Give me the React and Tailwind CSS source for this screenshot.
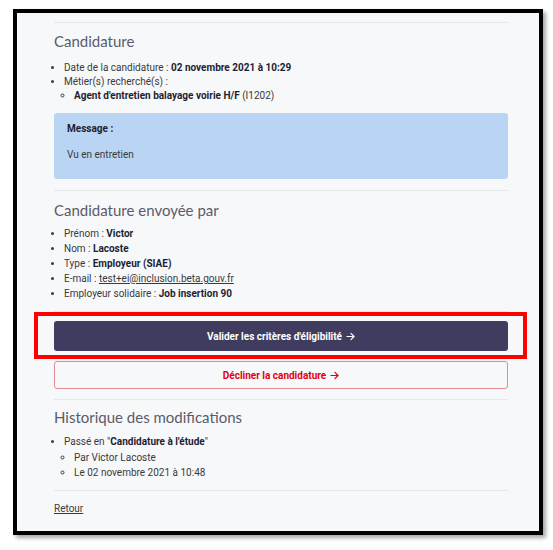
import React from 'react';

function Divider() {
  return <div className="h-px bg-[#e5e7eb]" />;
}

function Heading({ children }) {
  return (
    <h2 className="text-[15px] leading-[20px] text-[#5b5b6b] font-['Lato','Open_Sans',sans-serif]">
      {children}
    </h2>
  );
}

function Strong({ children }) {
  return <b className="font-bold text-[#1e1e32]">{children}</b>;
}

function Arrow() {
  return (
    <svg viewBox="0 0 10 10" className="inline-block w-[9px] h-[9px] ml-[4px] align-[-1px]" fill="none" stroke="currentColor" strokeWidth="1.3" strokeLinecap="round" strokeLinejoin="round">
      <path d="M1 5h8M5.5 1.5L9 5l-3.5 3.5" />
    </svg>
  );
}

export default function App() {
  return (
    <div className="w-[553px] h-[550px] bg-white pt-[9px] pl-[13px] font-['Roboto',sans-serif]">
      <div className="w-[530px] h-[526px] border-4 border-black bg-[#f7f8fa] shadow-[3px_3px_4px_rgba(0,0,0,0.35)] pl-[37px] pr-[31px] pt-[9px] text-[10px] text-[#3a3a3a]">
        <Divider />

        {/* Candidature */}
        <div className="pt-[8px]">
          <Heading>Candidature</Heading>
          <ul className="list-disc pl-[10px] mt-[10px] leading-[14px]">
            <li>
              Date de la candidature : <Strong>02 novembre 2021 à 10:29</Strong>
            </li>
            <li>
              Métier(s) recherché(s) :
              <ul className="list-[circle] pl-[10px]">
                <li>
                  <Strong>Agent d'entretien balayage voirie H/F</Strong> (I1202)
                </li>
              </ul>
            </li>
          </ul>
          <div className="mt-[10px] h-[66px] bg-[#b9d5f3] rounded-[3px] px-[13px] pt-[9px]">
            <p className="font-bold text-[#1e1e32] leading-[14px]">Message :</p>
            <p className="mt-[12px] leading-[14px]">Vu en entretien</p>
          </div>
        </div>

        <div className="mt-[11px]">
          <Divider />
        </div>

        {/* Envoyée par */}
        <div className="pt-[9px]">
          <Heading>Candidature envoyée par</Heading>
          <ul className="list-disc pl-[10px] mt-[6px] leading-[15px]">
            <li>
              Prénom : <Strong>Victor</Strong>
            </li>
            <li>
              Nom : <Strong>Lacoste</Strong>
            </li>
            <li>
              Type : <Strong>Employeur (SIAE)</Strong>
            </li>
            <li>
              E-mail : <a href="#" className="underline text-[#3a3a3a]">test+ei@inclusion.beta.gouv.fr</a>
            </li>
            <li>
              Employeur solidaire : <Strong>Job insertion 90</Strong>
            </li>
          </ul>
        </div>

        <div className="mt-[10px]">
          <Divider />
        </div>

        {/* Actions */}
        <div className="pt-[9px] flex flex-col gap-[10px]">
          <div className="relative">
            <button className="w-full h-[30px] rounded-[3px] bg-[#3f3c60] text-white font-bold text-[10px]">
              Valider les critères d'éligibilité<Arrow />
            </button>
            <div className="absolute left-[-20px] right-[-19px] top-[-9px] bottom-[-8px] border-4 border-[#ff0000] pointer-events-none" />
          </div>
          <button className="w-full h-[28px] rounded-[3px] border border-[#e38a92] text-[#e1000f] font-bold text-[10px] bg-[#f7f8fa]">
            Décliner la candidature<Arrow />
          </button>
        </div>

        <div className="mt-[10px]">
          <Divider />
        </div>

        {/* Historique */}
        <div className="pt-[7px]">
          <Heading>Historique des modifications</Heading>
          <ul className="list-disc pl-[10px] mt-[7px] leading-[15.5px]">
            <li>
              Passé en "<Strong>Candidature à l'étude</Strong>"
              <ul className="list-[circle] pl-[10px]">
                <li>Par Victor Lacoste</li>
                <li>Le 02 novembre 2021 à 10:48</li>
              </ul>
            </li>
          </ul>
        </div>

        <div className="mt-[9px]">
          <Divider />
        </div>

        <div className="pt-[10px]">
          <a href="#" className="underline text-[#3a3a3a]">Retour</a>
        </div>
      </div>
    </div>
  );
}
